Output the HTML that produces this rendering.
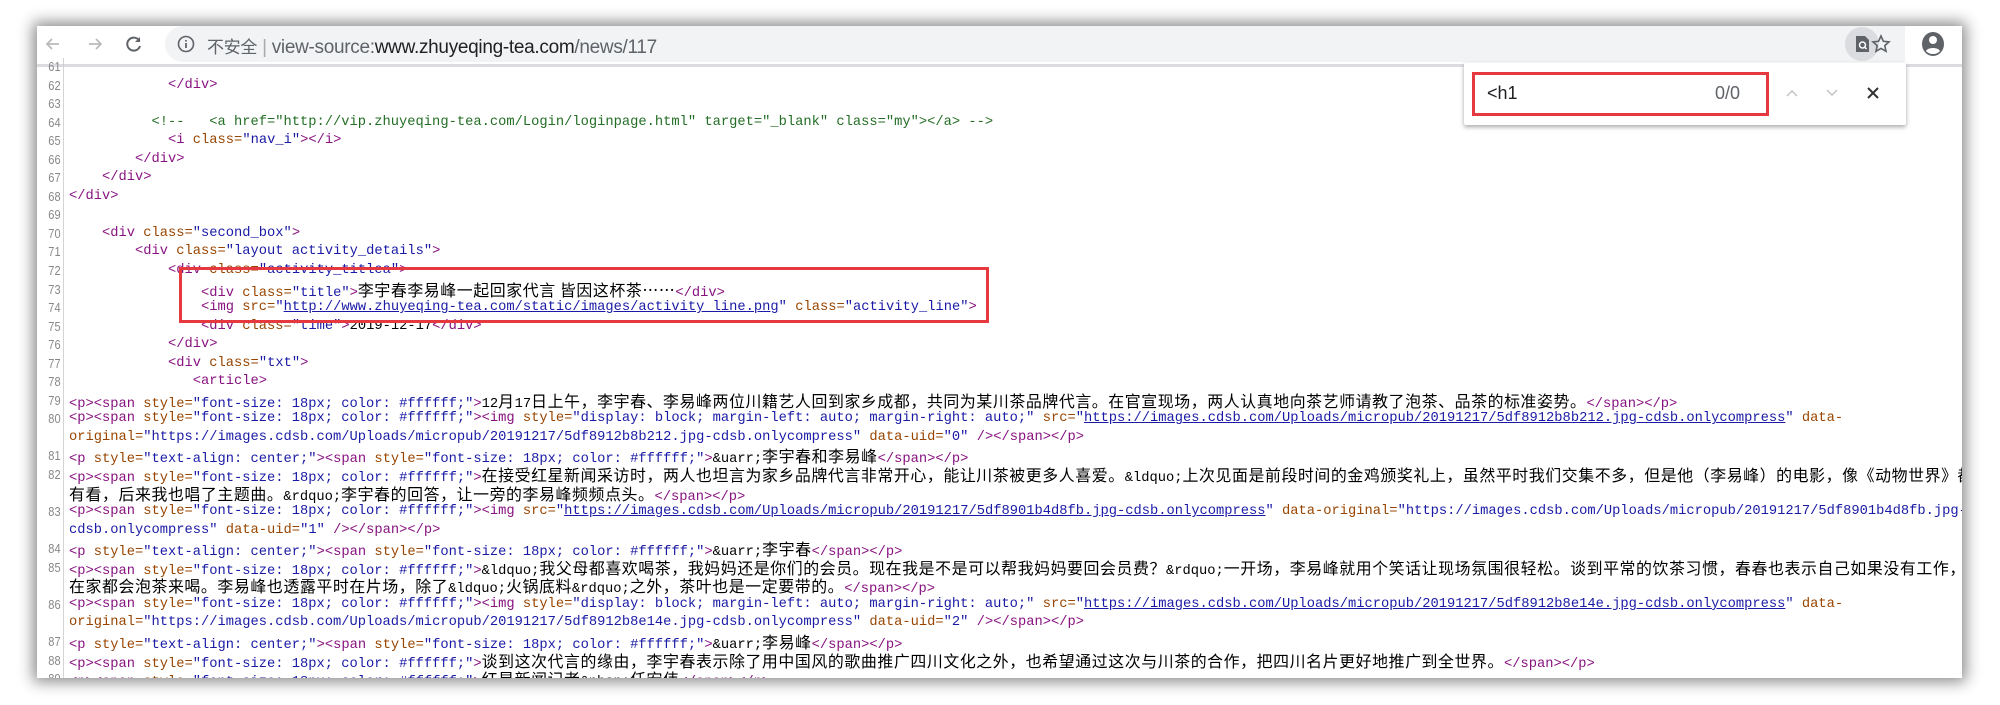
<!DOCTYPE html>
<html><head><meta charset="utf-8"><style>
*{margin:0;padding:0;box-sizing:border-box}
i{font-style:normal}
body{width:2000px;height:705px;background:#fff;position:relative;overflow:hidden;font-family:"Liberation Sans",sans-serif}
#win{position:absolute;left:37px;top:26px;width:1925px;height:652px;background:#fff;box-shadow:0 0 14px 4px rgba(0,0,0,.45);overflow:hidden}
#tb{position:absolute;left:0;top:0;width:100%;height:41px;background:#fff;border-bottom:3px solid #dadce0}
#omni{position:absolute;left:128px;top:0;width:1740px;height:36px;background:#f1f3f4;border-radius:18px 0 0 18px}
#url{position:absolute;left:42px;top:7px;font-size:19px;color:#5f6368;letter-spacing:-0.3px;white-space:nowrap}
#url b{color:#202124;font-weight:normal}
#code{position:absolute;left:0;top:32px;width:100%;font-family:"Liberation Mono","Noto Sans CJK SC",monospace;font-size:13.75px}
.r{position:relative;height:18.55px;line-height:18.55px;white-space:pre;overflow:hidden}
.n{position:absolute;left:0;width:27px;text-align:right;color:#888;font-family:"Liberation Sans",sans-serif;font-size:13px;border-right:1px solid #ccc;padding-right:3px;height:18.55px;transform:scaleX(.85);transform-origin:right}
.x{position:absolute;left:32px;color:#000}
.t{color:#881280}.a{color:#994500}.v{color:#1a1aa6}.c{color:#236e25}
.l{color:#1a1aa6;text-decoration:underline}
.z{font-family:"Noto Sans CJK SC",sans-serif;font-size:15.9px;letter-spacing:0.6px}
.red{position:absolute;border:3px solid #e5393f}
#find{position:absolute;left:1464px;top:63px;width:442px;height:62px;background:#fff;box-shadow:0 2px 5px rgba(0,0,0,.35);border-radius:2px}
</style></head><body>
<div id="win">
<div id="tb">
<svg style="position:absolute;left:6px;top:8px" width="20" height="20" viewBox="0 0 20 20"><path d="M16 10H4M9 5L4 10l5 5" stroke="#bbb" stroke-width="1.8" fill="none"/></svg>
<svg style="position:absolute;left:48px;top:8px" width="20" height="20" viewBox="0 0 20 20"><path d="M4 10h12M11 5l5 5-5 5" stroke="#bbb" stroke-width="1.8" fill="none"/></svg>
<svg style="position:absolute;left:87px;top:8px" width="20" height="20" viewBox="0 0 20 20"><path d="M15.5 7A6.5 6.5 0 1 0 16 12" stroke="#5f6368" stroke-width="2" fill="none"/><path d="M16 3v5h-5z" fill="#5f6368"/></svg>
<div id="omni">
<svg style="position:absolute;left:12px;top:9px" width="18" height="18" viewBox="0 0 18 18"><circle cx="9" cy="9" r="7.5" stroke="#5f6368" stroke-width="1.6" fill="none"/><path d="M9 8v5M9 5v1.5" stroke="#5f6368" stroke-width="1.8"/></svg>
<div id="url"><span style="font-family:'Noto Sans CJK SC',sans-serif;font-size:17px">不安全</span> <span style="color:#aaa">|</span> view-source:<b>www.zhuyeqing-tea.com</b>/news/117</div>
<div style="position:absolute;right:26px;top:1px;width:34px;height:34px;border-radius:17px;background:#dadce0"></div>
<svg style="position:absolute;right:34px;top:9px" width="17" height="18" viewBox="0 0 17 18"><path d="M2 1h9l4 4v12H2z" fill="#5f6368"/><circle cx="8.5" cy="10" r="3" stroke="#fff" stroke-width="1.5" fill="none"/><path d="M10.5 12l2 2" stroke="#fff" stroke-width="1.5"/></svg>
</div>
<svg style="position:absolute;left:1834px;top:8px" width="20" height="20" viewBox="0 0 20 20"><path d="M10 2l2.4 5.3 5.6.6-4.2 3.8 1.2 5.6L10 14.4 5 17.3l1.2-5.6L2 7.9l5.6-.6z" stroke="#5f6368" stroke-width="1.6" fill="none"/></svg>
<svg style="position:absolute;left:1884px;top:5px" width="24" height="26" viewBox="0 0 24 26"><ellipse cx="12" cy="13" rx="11" ry="12" fill="#5f6368"/><circle cx="12" cy="9" r="4" fill="#fff"/><path d="M5 20c2-4 12-4 14 0c-2 2-4 3-7 3s-5-1-7-3z" fill="#fff"/></svg>
</div>
<div id="code">
<div class="r"><span class="n">61</span><span class="x"></span></div>
<div class="r"><span class="n">62</span><span class="x">            <i class="t">&lt;/div&gt;</i></span></div>
<div class="r"><span class="n">63</span><span class="x"></span></div>
<div class="r"><span class="n">64</span><span class="x">          <i class="c">&lt;!--   &lt;a href="http://vip.zhuyeqing-tea.com/Login/loginpage.html" target="_blank" class="my"&gt;&lt;/a&gt; --&gt;</i></span></div>
<div class="r"><span class="n">65</span><span class="x">            <i class="t">&lt;i </i><i class="a">class=</i><i class="v">"nav_i"</i><i class="t">&gt;&lt;/i&gt;</i></span></div>
<div class="r"><span class="n">66</span><span class="x">        <i class="t">&lt;/div&gt;</i></span></div>
<div class="r"><span class="n">67</span><span class="x">    <i class="t">&lt;/div&gt;</i></span></div>
<div class="r"><span class="n">68</span><span class="x"><i class="t">&lt;/div&gt;</i></span></div>
<div class="r"><span class="n">69</span><span class="x"></span></div>
<div class="r"><span class="n">70</span><span class="x">    <i class="t">&lt;div </i><i class="a">class=</i><i class="v">"second_box"</i><i class="t">&gt;</i></span></div>
<div class="r"><span class="n">71</span><span class="x">        <i class="t">&lt;div </i><i class="a">class=</i><i class="v">"layout activity_details"</i><i class="t">&gt;</i></span></div>
<div class="r"><span class="n">72</span><span class="x">            <i class="t">&lt;div </i><i class="a">class=</i><i class="v">"activity_titlea"</i><i class="t">&gt;</i></span></div>
<div class="r"><span class="n">73</span><span class="x">                <i class="t">&lt;div </i><i class="a">class=</i><i class="v">"title"</i><i class="t">&gt;</i><i class="z">李宇春李易峰一起回家代言 皆因这杯茶……</i><i class="t">&lt;/div&gt;</i></span></div>
<div class="r"><span class="n">74</span><span class="x">                <i class="t">&lt;img </i><i class="a">src=</i><i class="v">"</i><i class="l">http://www.zhuyeqing-tea.com/static/images/activity_line.png</i><i class="v">"</i> <i class="a">class=</i><i class="v">"activity_line"</i><i class="t">&gt;</i></span></div>
<div class="r"><span class="n">75</span><span class="x">                <i class="t">&lt;div </i><i class="a">class=</i><i class="v">"time"</i><i class="t">&gt;</i>2019-12-17<i class="t">&lt;/div&gt;</i></span></div>
<div class="r"><span class="n">76</span><span class="x">            <i class="t">&lt;/div&gt;</i></span></div>
<div class="r"><span class="n">77</span><span class="x">            <i class="t">&lt;div </i><i class="a">class=</i><i class="v">"txt"</i><i class="t">&gt;</i></span></div>
<div class="r"><span class="n">78</span><span class="x">               <i class="t">&lt;article&gt;</i></span></div>
<div class="r"><span class="n">79</span><span class="x"><i class="t">&lt;p&gt;&lt;span </i><i class="a">style=</i><i class="v">"font-size: 18px; color: #ffffff;"</i><i class="t">&gt;</i>12<i class="z">月</i>17<i class="z">日上午，李宇春、李易峰两位川籍艺人回到家乡成都，共同为某川茶品牌代言。在官宣现场，两人认真地向茶艺师请教了泡茶、品茶的标准姿势。</i><i class="t">&lt;/span&gt;&lt;/p&gt;</i></span></div>
<div class="r"><span class="n">80</span><span class="x"><i class="t">&lt;p&gt;&lt;span </i><i class="a">style=</i><i class="v">"font-size: 18px; color: #ffffff;"</i><i class="t">&gt;&lt;img </i><i class="a">style=</i><i class="v">"display: block; margin-left: auto; margin-right: auto;"</i> <i class="a">src=</i><i class="v">"</i><i class="l">https://images.cdsb.com/Uploads/micropub/20191217/5df8912b8b212.jpg-cdsb.onlycompress</i><i class="v">"</i> <i class="a">data-</i></span></div>
<div class="r"><span class="n"></span><span class="x"><i class="a">original=</i><i class="v">"https://images.cdsb.com/Uploads/micropub/20191217/5df8912b8b212.jpg-cdsb.onlycompress"</i> <i class="a">data-uid=</i><i class="v">"0"</i> <i class="t">/&gt;&lt;/span&gt;&lt;/p&gt;</i></span></div>
<div class="r"><span class="n">81</span><span class="x"><i class="t">&lt;p </i><i class="a">style=</i><i class="v">"text-align: center;"</i><i class="t">&gt;&lt;span </i><i class="a">style=</i><i class="v">"font-size: 18px; color: #ffffff;"</i><i class="t">&gt;</i>&amp;uarr;<i class="z">李宇春和李易峰</i><i class="t">&lt;/span&gt;&lt;/p&gt;</i></span></div>
<div class="r"><span class="n">82</span><span class="x"><i class="t">&lt;p&gt;&lt;span </i><i class="a">style=</i><i class="v">"font-size: 18px; color: #ffffff;"</i><i class="t">&gt;</i><i class="z">在接受红星新闻采访时，两人也坦言为家乡品牌代言非常开心，能让川茶被更多人喜爱。</i>&amp;ldquo;<i class="z">上次见面是前段时间的金鸡颁奖礼上，虽然平时我们交集不多，但是他（李易峰）的电影，像《动物世界》都</i></span></div>
<div class="r"><span class="n"></span><span class="x"><i class="z">有看，后来我也唱了主题曲。</i>&amp;rdquo;<i class="z">李宇春的回答，让一旁的李易峰频频点头。</i><i class="t">&lt;/span&gt;&lt;/p&gt;</i></span></div>
<div class="r"><span class="n">83</span><span class="x"><i class="t">&lt;p&gt;&lt;span </i><i class="a">style=</i><i class="v">"font-size: 18px; color: #ffffff;"</i><i class="t">&gt;&lt;img </i><i class="a">src=</i><i class="v">"</i><i class="l">https://images.cdsb.com/Uploads/micropub/20191217/5df8901b4d8fb.jpg-cdsb.onlycompress</i><i class="v">"</i> <i class="a">data-original=</i><i class="v">"https://images.cdsb.com/Uploads/micropub/20191217/5df8901b4d8fb.jpg-</i></span></div>
<div class="r"><span class="n"></span><span class="x"><i class="v">cdsb.onlycompress"</i> <i class="a">data-uid=</i><i class="v">"1"</i> <i class="t">/&gt;&lt;/span&gt;&lt;/p&gt;</i></span></div>
<div class="r"><span class="n">84</span><span class="x"><i class="t">&lt;p </i><i class="a">style=</i><i class="v">"text-align: center;"</i><i class="t">&gt;&lt;span </i><i class="a">style=</i><i class="v">"font-size: 18px; color: #ffffff;"</i><i class="t">&gt;</i>&amp;uarr;<i class="z">李宇春</i><i class="t">&lt;/span&gt;&lt;/p&gt;</i></span></div>
<div class="r"><span class="n">85</span><span class="x"><i class="t">&lt;p&gt;&lt;span </i><i class="a">style=</i><i class="v">"font-size: 18px; color: #ffffff;"</i><i class="t">&gt;</i>&amp;ldquo;<i class="z">我父母都喜欢喝茶，我妈妈还是你们的会员。现在我是不是可以帮我妈妈要回会员费？</i>&amp;rdquo;<i class="z">一开场，李易峰就用个笑话让现场氛围很轻松。谈到平常的饮茶习惯，春春也表示自己如果没有工作，</i></span></div>
<div class="r"><span class="n"></span><span class="x"><i class="z">在家都会泡茶来喝。李易峰也透露平时在片场，除了</i>&amp;ldquo;<i class="z">火锅底料</i>&amp;rdquo;<i class="z">之外，茶叶也是一定要带的。</i><i class="t">&lt;/span&gt;&lt;/p&gt;</i></span></div>
<div class="r"><span class="n">86</span><span class="x"><i class="t">&lt;p&gt;&lt;span </i><i class="a">style=</i><i class="v">"font-size: 18px; color: #ffffff;"</i><i class="t">&gt;&lt;img </i><i class="a">style=</i><i class="v">"display: block; margin-left: auto; margin-right: auto;"</i> <i class="a">src=</i><i class="v">"</i><i class="l">https://images.cdsb.com/Uploads/micropub/20191217/5df8912b8e14e.jpg-cdsb.onlycompress</i><i class="v">"</i> <i class="a">data-</i></span></div>
<div class="r"><span class="n"></span><span class="x"><i class="a">original=</i><i class="v">"https://images.cdsb.com/Uploads/micropub/20191217/5df8912b8e14e.jpg-cdsb.onlycompress"</i> <i class="a">data-uid=</i><i class="v">"2"</i> <i class="t">/&gt;&lt;/span&gt;&lt;/p&gt;</i></span></div>
<div class="r"><span class="n">87</span><span class="x"><i class="t">&lt;p </i><i class="a">style=</i><i class="v">"text-align: center;"</i><i class="t">&gt;&lt;span </i><i class="a">style=</i><i class="v">"font-size: 18px; color: #ffffff;"</i><i class="t">&gt;</i>&amp;uarr;<i class="z">李易峰</i><i class="t">&lt;/span&gt;&lt;/p&gt;</i></span></div>
<div class="r"><span class="n">88</span><span class="x"><i class="t">&lt;p&gt;&lt;span </i><i class="a">style=</i><i class="v">"font-size: 18px; color: #ffffff;"</i><i class="t">&gt;</i><i class="z">谈到这次代言的缘由，李宇春表示除了用中国风的歌曲推广四川文化之外，也希望通过这次与川茶的合作，把四川名片更好地推广到全世界。</i><i class="t">&lt;/span&gt;&lt;/p&gt;</i></span></div>
<div class="r"><span class="n">89</span><span class="x"><i class="t">&lt;p&gt;&lt;span </i><i class="a">style=</i><i class="v">"font-size: 18px; color: #ffffff;"</i><i class="t">&gt;</i><i class="z">红星新闻记者</i>&amp;nbsp;<i class="z">任宏伟</i><i class="t">&lt;/span&gt;&lt;/p&gt;</i></span></div>
</div>
</div>
<div class="red" style="left:179px;top:267px;width:810px;height:56px"></div>
<div id="find">
<div class="red" style="left:8px;top:9px;width:297px;height:44px;border-width:3px"></div>
<div style="position:absolute;left:23px;top:20px;font-size:18px;color:#202124">&lt;h1</div>
<div style="position:absolute;left:251px;top:20px;font-size:18px;color:#5f6368">0/0</div>
<svg style="position:absolute;left:320px;top:22px" width="16" height="16" viewBox="0 0 16 16"><path d="M3 11l5-5 5 5" stroke="#c4c4c4" stroke-width="1.5" fill="none"/></svg>
<svg style="position:absolute;left:360px;top:22px" width="16" height="16" viewBox="0 0 16 16"><path d="M3 5l5 5 5-5" stroke="#c4c4c4" stroke-width="1.5" fill="none"/></svg>
<svg style="position:absolute;left:402px;top:23px" width="14" height="14" viewBox="0 0 14 14"><path d="M2 2l10 10M12 2L2 12" stroke="#333" stroke-width="2"/></svg>
</div>
</body></html>
